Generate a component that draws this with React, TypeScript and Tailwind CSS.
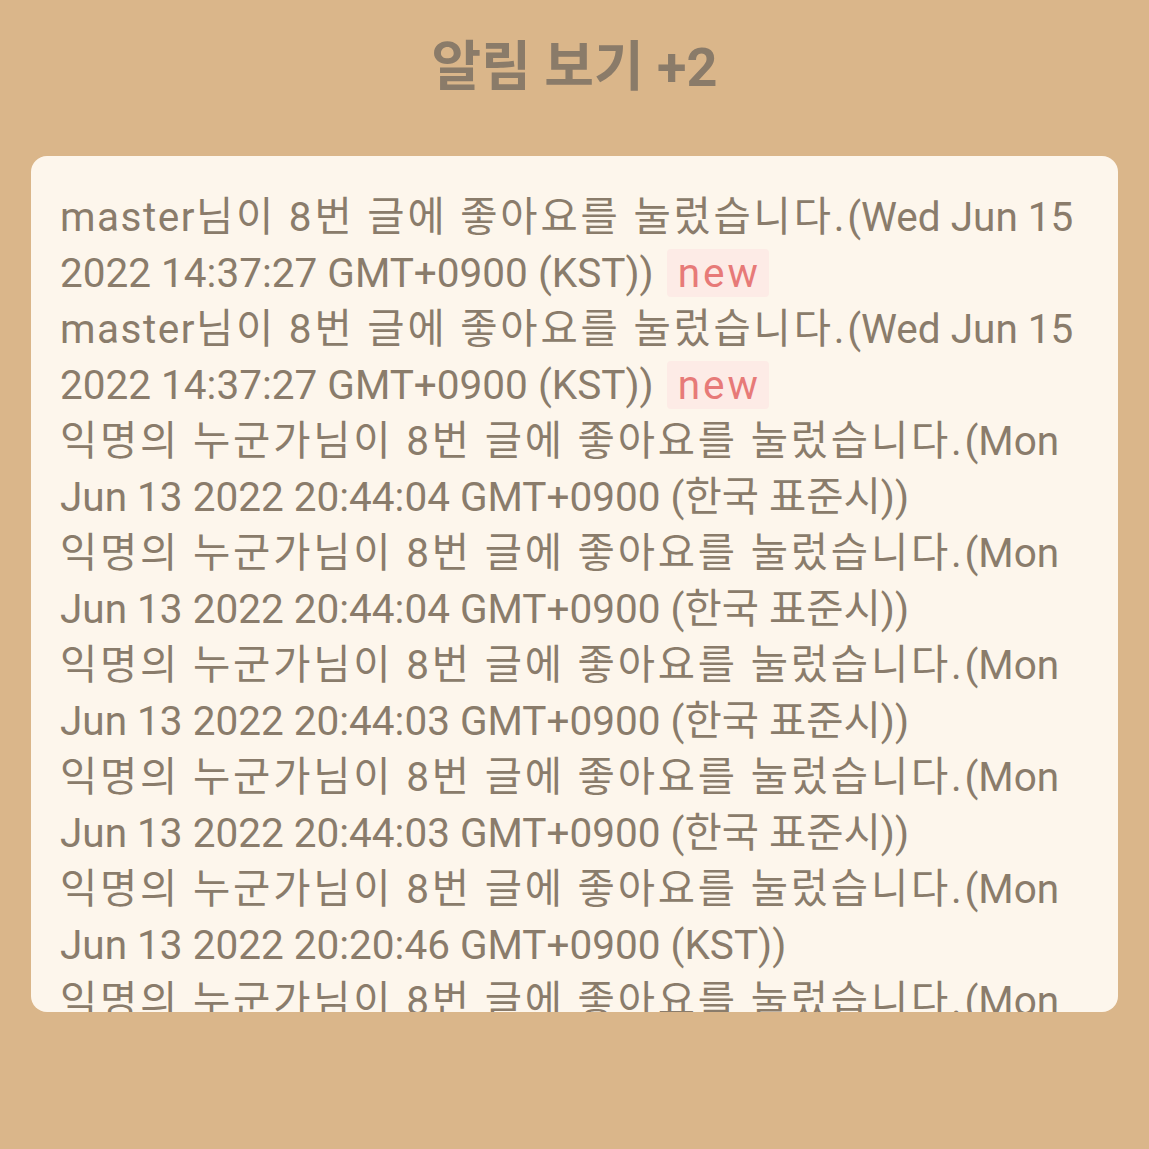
const items = [
  { who: "master", date: "Wed Jun 15 2022 14:37:27 GMT+0900 (KST)", isNew: true },
  { who: "master", date: "Wed Jun 15 2022 14:37:27 GMT+0900 (KST)", isNew: true },
  { who: "익명의 누군가", date: "Mon Jun 13 2022 20:44:04 GMT+0900 (한국 표준시)", isNew: false },
  { who: "익명의 누군가", date: "Mon Jun 13 2022 20:44:04 GMT+0900 (한국 표준시)", isNew: false },
  { who: "익명의 누군가", date: "Mon Jun 13 2022 20:44:03 GMT+0900 (한국 표준시)", isNew: false },
  { who: "익명의 누군가", date: "Mon Jun 13 2022 20:44:03 GMT+0900 (한국 표준시)", isNew: false },
  { who: "익명의 누군가", date: "Mon Jun 13 2022 20:20:46 GMT+0900 (KST)", isNew: false },
  { who: "익명의 누군가", date: "Mon Jun 13 2022 20:20:41 GMT+0900 (KST)", isNew: false },
];

export default function App() {
  return (
    <div className="min-h-[1149px] w-full bg-[#dab68a] font-['Roboto','Noto_Sans_CJK_KR',sans-serif] text-[#8a7c6b]">
      <h1 className="pt-[36px] text-center text-[54px] font-bold leading-[64px] text-[#8a7b69]">
        알림 보기 +2
      </h1>
      <div className="mx-[31px] mt-[56px] h-[856px] overflow-hidden rounded-[16px] bg-[#fdf6ec] px-[29px] pt-[33px]">
        {items.map((it, i) => (
          <p key={i} className="text-[40.5px] leading-[56px]">
            <span className={it.who === "master" ? "tracking-[1.5px]" : "tracking-[2.8px]"}>{it.who}</span>
            <span className="tracking-[2.8px]">님이 8번 글에 좋아요를 눌렀습니다.</span>({it.date})
            {it.isNew && (
              <span className="ml-[13px] rounded-[4px] bg-[#fdebe6] pl-[11px] pr-[8px] tracking-[3px] text-[#e77a78]">new</span>
            )}
          </p>
        ))}
      </div>
    </div>
  );
}
